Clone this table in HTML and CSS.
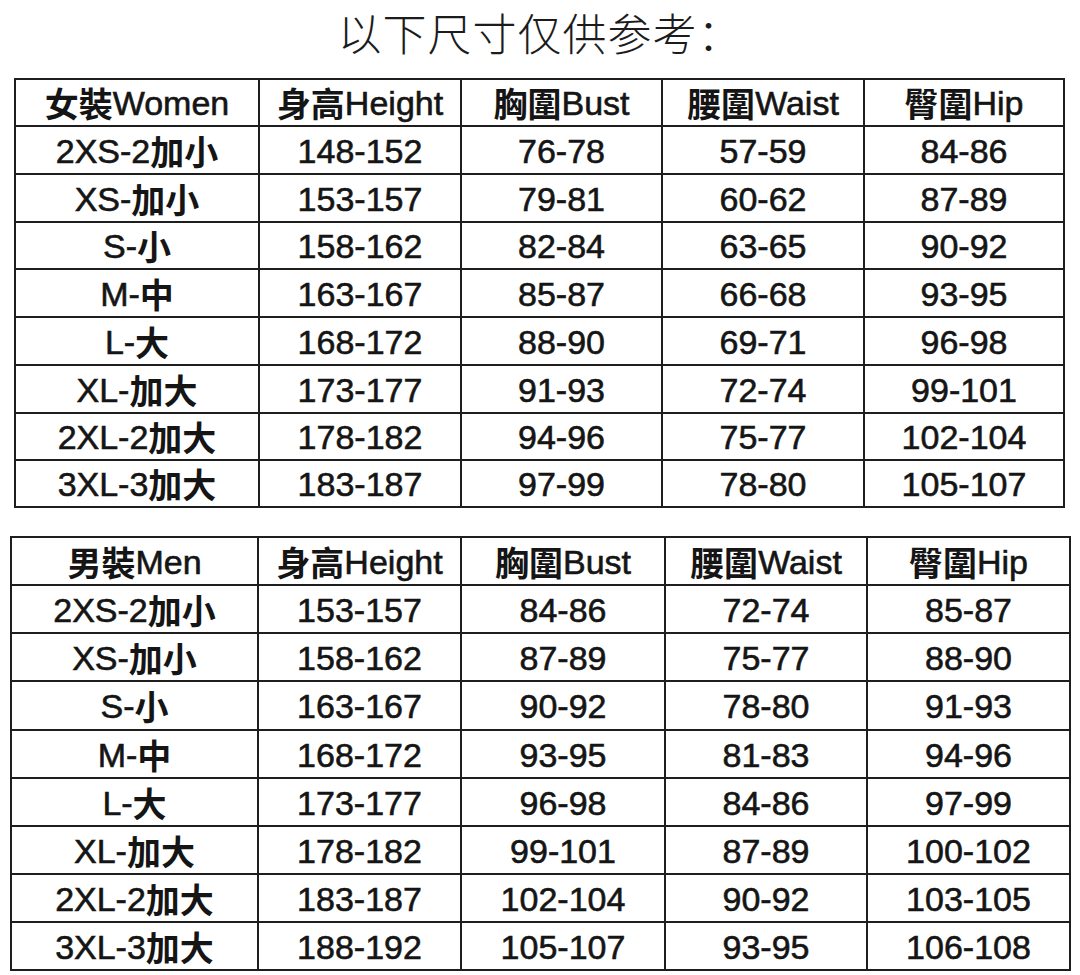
FILE: index.html
```html
<!DOCTYPE html>
<html lang="zh">
<head>
<meta charset="utf-8">
<title>尺寸表</title>
<link rel="stylesheet" href="styles.css">
</head>
<body>
<div class="page">
  <div class="title">以下尺寸仅供参考：</div>

  <div class="sheet women">
    <div class="c h"><span class="z">女裝</span>Women</div>
    <div class="c h"><span class="z">身高</span>Height</div>
    <div class="c h"><span class="z">胸圍</span>Bust</div>
    <div class="c h"><span class="z">腰圍</span>Waist</div>
    <div class="c h"><span class="z">臀圍</span>Hip</div>

    <div class="c">2XS-2<span class="z">加小</span></div><div class="c">148-152</div><div class="c">76-78</div><div class="c">57-59</div><div class="c">84-86</div>
    <div class="c">XS-<span class="z">加小</span></div><div class="c">153-157</div><div class="c">79-81</div><div class="c">60-62</div><div class="c">87-89</div>
    <div class="c">S-<span class="z">小</span></div><div class="c">158-162</div><div class="c">82-84</div><div class="c">63-65</div><div class="c">90-92</div>
    <div class="c">M-<span class="z">中</span></div><div class="c">163-167</div><div class="c">85-87</div><div class="c">66-68</div><div class="c">93-95</div>
    <div class="c">L-<span class="z">大</span></div><div class="c">168-172</div><div class="c">88-90</div><div class="c">69-71</div><div class="c">96-98</div>
    <div class="c">XL-<span class="z">加大</span></div><div class="c">173-177</div><div class="c">91-93</div><div class="c">72-74</div><div class="c">99-101</div>
    <div class="c">2XL-2<span class="z">加大</span></div><div class="c">178-182</div><div class="c">94-96</div><div class="c">75-77</div><div class="c">102-104</div>
    <div class="c">3XL-3<span class="z">加大</span></div><div class="c">183-187</div><div class="c">97-99</div><div class="c">78-80</div><div class="c">105-107</div>
  </div>

  <div class="sheet men">
    <div class="c h"><span class="z">男裝</span>Men</div>
    <div class="c h"><span class="z">身高</span>Height</div>
    <div class="c h"><span class="z">胸圍</span>Bust</div>
    <div class="c h"><span class="z">腰圍</span>Waist</div>
    <div class="c h"><span class="z">臀圍</span>Hip</div>

    <div class="c">2XS-2<span class="z">加小</span></div><div class="c">153-157</div><div class="c">84-86</div><div class="c">72-74</div><div class="c">85-87</div>
    <div class="c">XS-<span class="z">加小</span></div><div class="c">158-162</div><div class="c">87-89</div><div class="c">75-77</div><div class="c">88-90</div>
    <div class="c">S-<span class="z">小</span></div><div class="c">163-167</div><div class="c">90-92</div><div class="c">78-80</div><div class="c">91-93</div>
    <div class="c">M-<span class="z">中</span></div><div class="c">168-172</div><div class="c">93-95</div><div class="c">81-83</div><div class="c">94-96</div>
    <div class="c">L-<span class="z">大</span></div><div class="c">173-177</div><div class="c">96-98</div><div class="c">84-86</div><div class="c">97-99</div>
    <div class="c">XL-<span class="z">加大</span></div><div class="c">178-182</div><div class="c">99-101</div><div class="c">87-89</div><div class="c">100-102</div>
    <div class="c">2XL-2<span class="z">加大</span></div><div class="c">183-187</div><div class="c">102-104</div><div class="c">90-92</div><div class="c">103-105</div>
    <div class="c">3XL-3<span class="z">加大</span></div><div class="c">188-192</div><div class="c">105-107</div><div class="c">93-95</div><div class="c">106-108</div>
  </div>
</div>
</body>
</html>
```

FILE: styles.css
```css
html, body {
  margin: 0;
  padding: 0;
  background: #ffffff;
}

.page {
  width: 1080px;
  height: 975px;
  overflow: hidden;
  background: #ffffff;
}

.title {
  height: 64px;
  line-height: 64px;
  text-align: center;
  font-family: "Noto Sans CJK SC", "Noto Sans CJK TC", sans-serif;
  font-weight: 300;
  font-size: 44px;
  letter-spacing: 1px;
  color: #1c1c1c;
}

.sheet {
  display: grid;
  width: fit-content;
  border-left: 2px solid #1e1e1e;
  border-top: 2px solid #1e1e1e;
  font-family: "Liberation Sans", "Noto Sans CJK TC", "Noto Sans CJK SC", sans-serif;
  font-size: 34px;
  color: #151515;
}

.women {
  margin-top: 14px;
  margin-left: 14px;
  grid-template-columns: 244px 202px 201px 202px 200px;
  grid-template-rows: 47px 48px 48px 47px 48px 48px 48px 47px 47px;
}

.men {
  margin-top: 28px;
  margin-left: 10px;
  grid-template-columns: 247px 203px 204px 202px 203px;
  grid-template-rows: 48px 48px 48px 49px 48px 48px 48px 48px 48px;
}

.c {
  box-sizing: border-box;
  border-right: 2px solid #1e1e1e;
  border-bottom: 2px solid #1e1e1e;
  display: flex;
  align-items: center;
  justify-content: center;
  white-space: nowrap;
  line-height: 1;
  padding-top: 1px;
  -webkit-text-stroke: 0.6px #151515;
}

.z {
  font-family: "Noto Sans CJK TC", "Noto Sans CJK SC", sans-serif;
  font-weight: 700;
  -webkit-text-stroke: 0;
}
```
